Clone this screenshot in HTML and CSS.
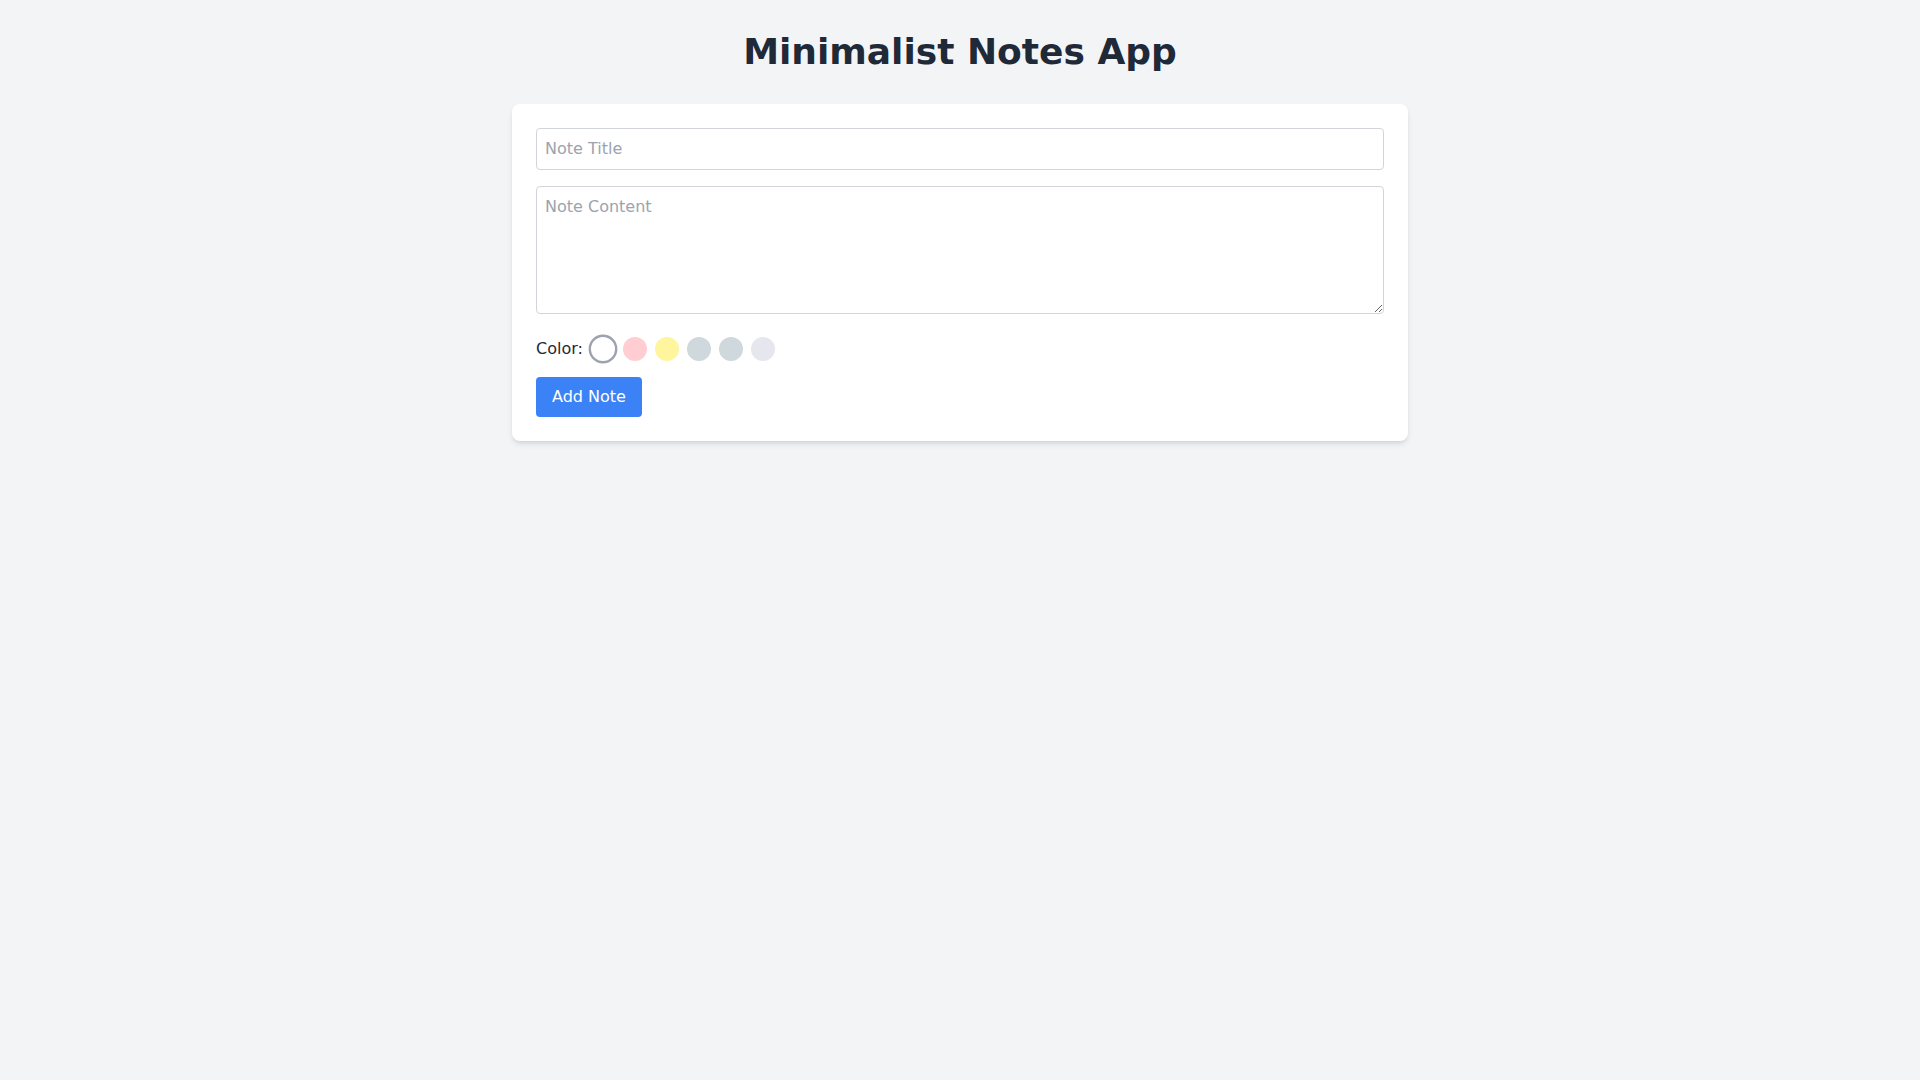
FILE: index.html
```html
<!DOCTYPE html>
<html lang="en">
<head>
<meta charset="utf-8">
<title>Minimalist Notes App</title>
<link rel="stylesheet" href="styles.css">
</head>
<body>
<main class="container">
  <h1 class="title">Minimalist Notes App</h1>
  <section class="card">
    <input class="field" type="text" placeholder="Note Title">
    <textarea class="field area" placeholder="Note Content"></textarea>
    <div class="color-row">
      <span class="label">Color:</span>
      <div class="swatches">
        <button class="swatch selected" style="background:#ffffff"></button>
        <button class="swatch" style="background:#ffcdd2"></button>
        <button class="swatch" style="background:#fff59d"></button>
        <button class="swatch" style="background:#cfd8dc"></button>
        <button class="swatch" style="background:#cfd8dc"></button>
        <button class="swatch" style="background:#e6e7ee"></button>
      </div>
    </div>
    <button class="add-btn">Add Note</button>
  </section>
</main>
</body>
</html>
```

FILE: styles.css
```css
* { box-sizing: border-box; }
html, body { margin: 0; padding: 0; }
body {
  background: #f3f4f6;
  font-family: "DejaVu Sans", sans-serif;
  color: #1f2937;
  font-size: 16px;
  line-height: 24px;
}
.container {
  max-width: 896px;
  margin: 0 auto;
  padding: 32px 0;
}
.title {
  margin: 0 0 32px;
  font-size: 36px;
  line-height: 40px;
  font-weight: bold;
  text-align: center;
  color: #1f2937;
}
.card {
  background: #fff;
  border-radius: 8px;
  box-shadow: 0 4px 6px -1px rgba(0,0,0,0.1), 0 2px 4px -2px rgba(0,0,0,0.1);
  padding: 24px;
}
.field {
  display: block;
  width: 100%;
  margin: 0 0 16px;
  padding: 8px;
  border: 1px solid #d1d5db;
  border-radius: 4px;
  font-family: "DejaVu Sans", sans-serif;
  font-size: 16px;
  line-height: 24px;
  color: #1f2937;
  background: #fff;
  outline: none;
}
.field::placeholder { color: #9ca3af; }
.area {
  height: 128px;
  resize: vertical;
  margin-bottom: 23px;
}
.color-row {
  display: flex;
  align-items: center;
  height: 24px;
  margin-bottom: 16px;
}
.label { margin-right: 8px; color: #1f2937; }
.swatches { display: flex; gap: 8px; }
.swatch {
  width: 24px;
  height: 24px;
  padding: 0;
  border: 2px solid transparent;
  border-radius: 50%;
  cursor: pointer;
}
.swatch.selected {
  border-color: #9ca3af;
  transform: scale(1.2);
}
.add-btn {
  display: block;
  padding: 8px 16px;
  border: none;
  border-radius: 4px;
  background: #3b82f6;
  color: #fff;
  font-family: "DejaVu Sans", sans-serif;
  font-size: 16px;
  line-height: 24px;
  cursor: pointer;
}
```
